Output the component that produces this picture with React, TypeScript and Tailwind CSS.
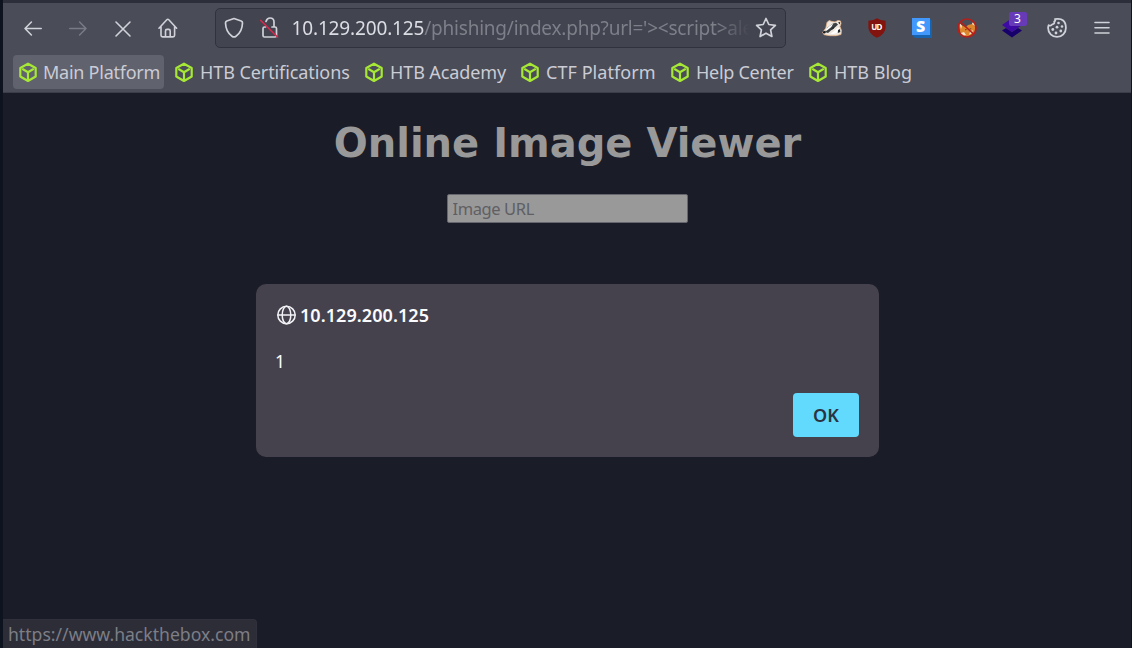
import React from "react";

const Cube = () => (
  <svg className="h-5 w-[18px] shrink-0" viewBox="0 0 18 20" fill="none" stroke="#a6e835" strokeWidth="2.2" strokeLinejoin="round" strokeLinecap="round">
    <path d="M9 1.7 16.7 6v8.500L9 19 1.300 14.500V6zM4 7.300 9 10.300l5-3M9 10.300V17" />
  </svg>
);

const bookmarks = [
  { label: "Main Platform", cls: "w-[151px] bg-[#60626d]", text: "tracking-[-0.250px]" },
  { label: "HTB Certifications", cls: "w-[185px] ml-[5px]", text: "tracking-[-0.080px]" },
  { label: "HTB Academy", cls: "w-[151px] ml-[5px]", text: "tracking-[-0.100px]" },
  { label: "CTF Platform", cls: "w-[145px] ml-[5px]", text: "tracking-[0.060px]" },
  { label: "Help Center", cls: "w-[133px] ml-[5px]", text: "tracking-[-0.280px]" },
  { label: "HTB Blog", cls: "w-[115px] ml-[5px]", text: "tracking-[0px]" },
];

const Slot = ({ children }: { children: React.ReactNode }) => (
  <button className="flex h-10 w-[45px] shrink-0 items-center justify-center">{children}</button>
);

const line = { fill: "none", stroke: "#d0d1d9", strokeWidth: 1.6, strokeLinecap: "round", strokeLinejoin: "round" } as const;

const Nav = () => (
  <div className="flex">
    <Slot>
      <svg width="20" height="20" viewBox="0 0 20 20" {...line}><path d="M18.2 10.5H2M8.4 4 2 10.5 8.4 17" /></svg>
    </Slot>
    <Slot>
      <svg width="20" height="20" viewBox="0 0 20 20" {...line} stroke="#787a84"><path d="M1.8 10.5H18M11.6 4 18 10.5 11.6 17" /></svg>
    </Slot>
    <Slot>
      <svg width="20" height="20" viewBox="0 0 20 20" {...line}><path d="m3 4 14 14M17 4 3 18" /></svg>
    </Slot>
    <Slot>
      <svg width="20" height="20" viewBox="0 0 20 20" {...line}>
        <path d="M1 10.2 8.8 1.7q1-1 2 0l7.8 8.5M3 8.3v9q0 1.6 1.6 1.6H15q1.6 0 1.6-1.6v-9M7.5 18.5V13q0-1.6 1.5-1.6h1.7q1.5 0 1.5 1.6v5.5" />
      </svg>
    </Slot>
  </div>
);

const AddressBar = () => (
  <div className="ml-[24px] flex h-10 w-[571px] items-center rounded-[5px] border border-[#30323d] bg-[#42444f] pl-[8.500px] pr-[8px]">
    <svg className="shrink-0" width="20" height="22" viewBox="0 0 20 22" {...line} strokeWidth="1.7">
      <path d="M10 1.5 17.2 4q1.4.5 1.3 2-.3 9-6.5 13.2-2 1.4-4 0Q1.800 15 1.500 6q0-1.500 1.300-2z" />
    </svg>
    <svg className="ml-4 shrink-0" width="20" height="22" viewBox="0 0 20 22" {...line} strokeWidth="1.7">
      <path d="M6 4.500Q7 1 10 1q4 0 4 4v4.800M12 10h3q1.500 0 1.500 1.500v7q0 1.500-1.500 1.500H4.500q-1.500 0-1.500-1.500v-7Q3 10 4.500 10h1" />
      <path d="M.8 3.500 17.500 20" stroke="#d52a4d" />
    </svg>
    <div className="ml-[11.500px] w-[458px] shrink-0 overflow-hidden whitespace-nowrap text-[19px] leading-[30px] text-[#7d7f89] [mask-image:linear-gradient(to_right,black_425px,transparent_458px)]">
      <span className="tracking-[-0.150px] text-[#dcdde4]">10.129.200.125</span>
      <span className="tracking-[-0.220px]">/phishing/index.php?url='&gt;&lt;script&gt;ale</span>
    </div>
    <svg className="ml-auto shrink-0" width="22" height="22" viewBox="0 0 22 22" {...line} strokeWidth="1.7">
      <path d="m11 1.500 2.800 6 6.600.8-4.800 4.600 1.300 6.600L11 16.200l-5.900 3.300 1.300-6.600L1.600 8.300l6.600-.8z" />
    </svg>
  </div>
);

const Extensions = () => (
  <div className="ml-[23.500px] flex">
    <Slot>
      <svg width="20" height="20" viewBox="0 0 20 20">
        <path d="M.7 14.500 3.800 10 5 4.500l2-2 3 1L13 4l3-1.500 2.500.5.5 2.500-1 3 1.500 4-.5 4-5 1.200H8l-6-1z" fill="#eee7df" stroke="#e5b58c" strokeWidth=".8" />
        <path d="m5.500 9.500 5.500-4 3-.8 2 1.800-2 2-4.500 3.500L6 15l-3-1z" fill="#3a3f42" />
        <path d="m3.800 11.500 3-3 4.500-3-2 3.500-5 4zM11 14l5-4.500 2 2-3 3.500-4 1-3-.5z" fill="#fff" />
        <path d="m9.500 10 3-1.500-.5 2-2.500 1.500zM16 4.500l2-.5v2.500zM16 12l2-1 .3 3-2.500 1z" fill="#24292b" />
        <circle cx="2.300" cy="14.300" r="1.300" fill="#17191b" />
      </svg>
    </Slot>
    <Slot>
      <div className="relative flex h-5 w-[18px] items-center justify-center">
        <svg className="absolute inset-0" width="18" height="20" viewBox="0 0 18 20">
          <path d="M9 .2Q12 2.500 17.600 2.800v6.700q0 6.200-8.600 10.300Q.4 15.700.4 9.500V2.800Q6 2.500 9 .2z" fill="#82130e" />
        </svg>
        <span className="relative mb-[2px] text-[8px] font-bold leading-none tracking-[-0.700px] text-white">UD</span>
      </div>
    </Slot>
    <Slot>
      <div className="relative h-5 w-5">
        <svg className="absolute inset-0" width="20" height="20" viewBox="0 0 20 20">
          <path d="m0 17 3 3h17V3l-2-2z" fill="#1763ad" />
          <path d="M0 0h18v17H0z" fill="#4298fb" />
        </svg>
        <span className="relative block w-[18px] text-center text-[16px] font-black leading-[17px] text-white">S</span>
      </div>
    </Slot>
    <Slot>
      <svg width="20" height="20" viewBox="0 0 20 20">
        <path d="m2 5 4 3 3 1 2-2 4-1 2-3 1 6v5l-4 3-5 2-5-1-1-5z" fill="#dc862d" />
        <path d="m2.500 5 2.500 3-1 3zM4 15l3-1 2 3-3 1zM16.500 3l1.500 5-3-2zM13 14l3-2-1 3-3 2z" fill="#fbe9cf" />
        <path d="m8 11 2 .5-1.500 1zM12 11l2.500-1-1 1.500z" fill="#64351a" />
        <circle cx="10" cy="10" r="9" fill="none" stroke="#b51f1b" strokeWidth="1.700" />
        <path d="m3.500 4 13 12" stroke="#b51f1b" strokeWidth="1.700" />
      </svg>
    </Slot>
    <Slot>
      <div className="relative h-5 w-5">
        <svg width="20" height="20" viewBox="0 0 20 20">
          <path d="m0 12.500 4-2.500 6 4 6-4 4 2.500-10 7z" fill="#18006c" />
          <path d="m10 0 10 7-10 7-10-7z" fill="#3d0aa3" />
        </svg>
        <span className="absolute -top-[6px] left-[7px] h-[14px] w-[18px] rounded-[2px] bg-[#673ab7] text-center text-[12px] leading-[14px] text-white">3</span>
      </div>
    </Slot>
    <Slot>
      <svg width="20" height="20" viewBox="0 0 20 20" {...line}>
        <path d="M8 1.100Q18.900-.5 18.900 10A8.900 8.900 0 0 1 1.100 10q0-1.500.5-2.800 2.400 1.200 3.600-.8Q8 6 7.200 3.600 8.800 2.700 8 1.100z" strokeWidth="1.800" />
        <g fill="#d0d1d9" stroke="none"><circle cx="11.500" cy="5" r="1.300" /><circle cx="15" cy="8.500" r="1.300" /><circle cx="10" cy="9.200" r="1.400" /><circle cx="5.800" cy="11.500" r="1.400" /><circle cx="13.800" cy="13" r="1.400" /><circle cx="9" cy="15" r="1.400" /></g>
      </svg>
    </Slot>
    <Slot>
      <svg width="20" height="20" viewBox="0 0 20 20" {...line}><path d="M3 4.500h14M3 9.800h14M3 15h14" /></svg>
    </Slot>
  </div>
);

export default function App() {
  return (
    <div className="flex h-[648px] w-[1132px] flex-col overflow-hidden border-l-[3px] border-r border-[#0d1420] bg-[#1a1c27] font-['Noto_Sans',sans-serif]">
      <header className="h-[93px] shrink-0 border-b border-t-[3px] border-b-[#3b3d48] border-t-[#2c2e39] bg-[#4a4c57]">
        <div className="flex h-[50px] items-center pl-[7.500px]">
          <Nav />
          <AddressBar />
          <Extensions />
        </div>
        <nav className="ml-[10px] mt-[2px] flex">
          {bookmarks.map((b) => (
            <a key={b.label} className={"flex h-[34px] shrink-0 items-center gap-[7px] whitespace-nowrap rounded-[4px] pl-[6px] text-[18px] leading-[34px] text-[#cbccd5] first:gap-[6px] " + b.cls}>
              <Cube />
              <span className={b.text}>{b.label}</span>
            </a>
          ))}
        </nav>
      </header>
      <main className="flex min-h-0 flex-1 flex-col items-center pl-px">
        <h1 className="mt-[26px] whitespace-nowrap font-['DejaVu_Sans',sans-serif] text-[40px] font-bold leading-[48px] text-[#99999a]">Online Image Viewer</h1>
        <input placeholder="Image URL" className="mt-[27px] h-[29px] w-[241px] rounded-[2px] border border-[#66666e] bg-[#99999a] px-[4.500px] text-[16.500px] tracking-[-0.400px] placeholder:text-[#5f5f63]" />
        <section role="alertdialog" className="mt-[61px] flex h-[173px] w-[623px] flex-col rounded-[10px] bg-[#45424d] px-[20px]">
          <div className="mt-[21px] flex h-5 items-center gap-[3px] text-[18px] font-semibold text-[#fbfbfe]">
            <svg width="21" height="20" viewBox="0 0 21 20" {...line} stroke="#f2f2f6" strokeWidth="1.500">
              <circle cx="10.500" cy="10" r="8.700" /><ellipse cx="10.500" cy="10" rx="4.300" ry="8.700" /><path d="M2 10h17" />
            </svg>
            <span className="tracking-[0.060px]">10.129.200.125</span>
          </div>
          <p className="-ml-px mt-6 text-[17.500px] leading-6 text-[#fbfbfe]">1</p>
          <button className="mt-5 h-11 w-[66px] self-end rounded-[4px] bg-[#62dafd] text-[18px] font-semibold text-[#2b3440]">OK</button>
        </section>
        <footer className="-ml-px mt-auto h-[29px] w-[254px] self-start rounded-tr-[4px] border-r border-t border-[#2f303b] bg-[#2c2d37] pl-[5px] text-[17.600px] leading-[29px] text-[#7d7e86]">https://www.hackthebox.com</footer>
      </main>
    </div>
  );
}
